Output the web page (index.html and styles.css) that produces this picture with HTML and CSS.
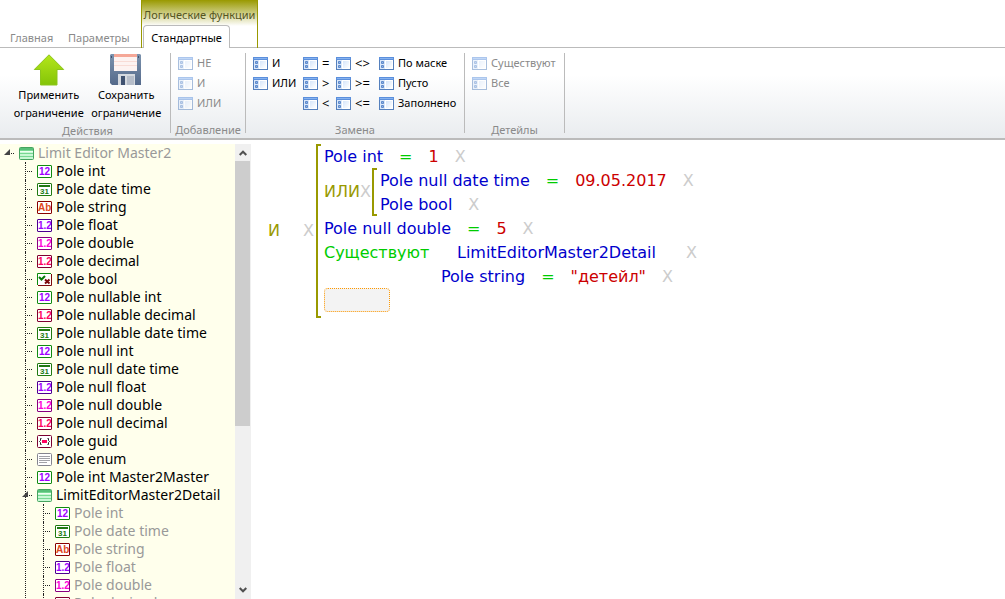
FILE: index.html
```html
<!DOCTYPE html>
<html lang="ru">
<head>
<meta charset="utf-8">
<title>Limit Editor</title>
<link rel="stylesheet" href="styles.css">
</head>
<body>
<svg class="defs" aria-hidden="true">
  <defs>
    <linearGradient id="leaf" x1="0" y1="0" x2="0" y2="1"><stop offset="0" stop-color="#b4e61a"/><stop offset="1" stop-color="#84c408"/></linearGradient>
    <linearGradient id="steel" x1="0" y1="0" x2="0" y2="1"><stop offset="0" stop-color="#7c93ae"/><stop offset="1" stop-color="#54698a"/></linearGradient>
    <linearGradient id="pane" x1="0" y1="0" x2="1" y2="1"><stop offset="0" stop-color="#d5e5fa"/><stop offset="1" stop-color="#ffffff"/></linearGradient>
  </defs>
  <symbol id="form" viewBox="0 0 15 13">
    <rect x=".5" y=".5" width="14" height="12" fill="#fff" stroke="#5580bd"/>
    <rect x="0" y="0" width="15" height="3" fill="#5b8fdc"/><rect x="1" y="1" width="13" height="1" fill="#86b2ef"/>
    <rect x="1" y="3" width="5" height="9" fill="#dbe8fa"/>
    <path d="M2.5 4.5h2v2h-2zM2.5 8.500h2v2h-2z" fill="#8fb3e8" stroke="#5e8acb"/>
    <rect x="7" y="4" width="6" height="7" fill="url(#pane)"/>
  </symbol>
  <symbol id="table" viewBox="0 0 15 13">
    <rect x=".5" y=".5" width="14" height="12" rx="1" fill="#c9f8d5" stroke="#45a35f"/>
    <path d="M1 1h13v2H1z" fill="#57c078"/><path d="M1 3h13v1H1zM1 6h13v1H1zM1 9h13v1H1z" fill="#78d893"/><path d="M1 4h13v1H1z" fill="#effff2"/>
  </symbol>
  <symbol id="bool" viewBox="0 0 15 13">
    <path d="M1 1h13v11H1z" fill="#fff"/>
    <path d="M.5 12V.5H14" fill="none" stroke="#0b8a0b"/><path d="M1 12.500h13.500V1" fill="none" stroke="#7c0a0a"/>
    <path d="M2 4l2.500 2.500L8 3" fill="none" stroke="#077a07" stroke-width="2"/><path d="M8 6.500l4.500 4M12.500 6.500l-4.500 4" stroke="#7c0a0a" stroke-width="2"/>
  </symbol>
  <symbol id="guid" viewBox="0 0 15 13">
    <rect x=".5" y=".5" width="14" height="12" rx="1" fill="#fff" stroke="#7a0030"/><path d="M4.500 3.500h-1v2l-1 1 1 1v2h1M10.500 3.500h1v2l1 1-1 1v2h-1" fill="none" stroke="#222"/><path d="M5 5h5v3H5z" fill="#ff0060"/>
  </symbol>
  <symbol id="enum" viewBox="0 0 15 13">
    <rect x=".5" y=".5" width="14" height="12" rx="1" fill="#fff" stroke="#85858f"/><path d="M2 3.500h11M2 5.500h11M2 7.500h11M2 9.500h8" stroke="#a2a2a8"/>
  </symbol>
  <symbol id="chev" viewBox="0 0 8 6"><path d="M.7 5L4 1.700 7.300 5" fill="none" stroke="#505050" stroke-width="2"/></symbol>
</svg>

<header class="ribbon">
  <nav class="tabs">
    <button class="tab first">Главная</button>
    <button class="tab second">Параметры</button>
    <div class="context">
      <div class="context-title">Логические функции</div>
      <button class="tab active">Стандартные</button>
    </div>
  </nav>
  <div class="groups">
    <section class="group actions">
      <div class="big-row">
        <button class="big"><svg width="32" height="32" viewBox="0 0 32 32" aria-hidden="true"><path d="M16 .8L30.700 15.500H24V31H7.500V15.500H1.300z" fill="url(#leaf)" stroke="#8cc51c"/></svg><span>Применить</span><span>ограничение</span></button>
        <button class="big"><svg width="32" height="32" viewBox="0 0 32 32" aria-hidden="true"><path d="M1 0h29l1 1v30H2l-2-2V1z" fill="url(#steel)"/><path d="M4 0h23v17H4z" fill="#fdf3f1"/><path d="M4 0h23v3H4z" fill="#f5a797"/><path d="M4 7.500h23M4 11.500h23" stroke="#f8dcd6"/><path d="M8 20h17v11H8z" fill="#d5d9df"/><path d="M11 22h4v9h-4z" fill="#405270"/><path d="M17 22h7v9h-7z" fill="#b6bdc9"/><path d="M1 2h1v2H1zM28 2h1v2h-1z" fill="#3f516d"/></svg><span>Сохранить</span><span>ограничение</span></button>
      </div>
      <h2>Действия</h2>
    </section>
    <section class="group add">
      <div class="cols"><div class="col">
        <button class="cmd" disabled><svg><use href="#form"/></svg>НЕ</button>
        <button class="cmd" disabled><svg><use href="#form"/></svg>И</button>
        <button class="cmd" disabled><svg><use href="#form"/></svg>ИЛИ</button>
      </div></div>
      <h2>Добавление</h2>
    </section>
    <section class="group replace">
      <div class="cols">
        <div class="col c1"><button class="cmd"><svg><use href="#form"/></svg>И</button><button class="cmd"><svg><use href="#form"/></svg>ИЛИ</button></div>
        <div class="col ops c2"><button class="cmd"><svg><use href="#form"/></svg>=</button><button class="cmd"><svg><use href="#form"/></svg>&gt;</button><button class="cmd"><svg><use href="#form"/></svg>&lt;</button></div>
        <div class="col ops c3"><button class="cmd"><svg><use href="#form"/></svg>&lt;&gt;</button><button class="cmd"><svg><use href="#form"/></svg>&gt;=</button><button class="cmd"><svg><use href="#form"/></svg>&lt;=</button></div>
        <div class="col"><button class="cmd"><svg><use href="#form"/></svg>По маске</button><button class="cmd"><svg><use href="#form"/></svg>Пусто</button><button class="cmd"><svg><use href="#form"/></svg>Заполнено</button></div>
      </div>
      <h2>Замена</h2>
    </section>
    <section class="group details">
      <div class="cols"><div class="col">
        <button class="cmd" disabled><svg><use href="#form"/></svg>Существуют</button>
        <button class="cmd" disabled><svg><use href="#form"/></svg>Все</button>
      </div></div>
      <h2>Детейлы</h2>
    </section>
  </div>
</header>

<div class="work">
  <aside class="side">
    <ul class="tree">
      <li class="open root muted"><div class="node"><svg><use href="#table"/></svg>Limit Editor Master2</div>
        <ul class="plain">
          <li><div class="node"><i class="ic int">12</i>Pole int</div></li>
          <li><div class="node"><i class="ic date">31</i>Pole date time</div></li>
          <li><div class="node"><i class="ic str">Ab</i>Pole string</div></li>
          <li><div class="node"><i class="ic flt">1.2</i>Pole float</div></li>
          <li><div class="node"><i class="ic dbl">1.2</i>Pole double</div></li>
          <li><div class="node"><i class="ic dec">1.2</i>Pole decimal</div></li>
          <li><div class="node"><svg><use href="#bool"/></svg>Pole bool</div></li>
          <li><div class="node"><i class="ic int">12</i>Pole nullable int</div></li>
          <li><div class="node"><i class="ic dec">1.2</i>Pole nullable decimal</div></li>
          <li><div class="node"><i class="ic date">31</i>Pole nullable date time</div></li>
          <li><div class="node"><i class="ic int">12</i>Pole null int</div></li>
          <li><div class="node"><i class="ic date">31</i>Pole null date time</div></li>
          <li><div class="node"><i class="ic flt">1.2</i>Pole null float</div></li>
          <li><div class="node"><i class="ic dbl">1.2</i>Pole null double</div></li>
          <li><div class="node"><i class="ic dec">1.2</i>Pole null decimal</div></li>
          <li><div class="node"><svg><use href="#guid"/></svg>Pole guid</div></li>
          <li><div class="node"><svg><use href="#enum"/></svg>Pole enum</div></li>
          <li><div class="node"><i class="ic int">12</i>Pole int Master2Master</div></li>
          <li class="open"><div class="node"><svg><use href="#table"/></svg>LimitEditorMaster2Detail</div>
            <ul class="muted">
              <li><div class="node"><i class="ic int">12</i>Pole int</div></li>
              <li><div class="node"><i class="ic date">31</i>Pole date time</div></li>
              <li><div class="node"><i class="ic str">Ab</i>Pole string</div></li>
              <li><div class="node"><i class="ic flt">1.2</i>Pole float</div></li>
              <li><div class="node"><i class="ic dbl">1.2</i>Pole double</div></li>
              <li><div class="node"><i class="ic dec">1.2</i>Pole decimal</div></li>
            </ul>
          </li>
        </ul>
      </li>
    </ul>
    <div class="scroll" aria-hidden="true">
      <svg class="arrow"><use href="#chev"/></svg>
      <div class="track"><div class="thumb"></div></div>
      <svg class="arrow down"><use href="#chev"/></svg>
    </div>
  </aside>
  <main class="editor">
    <span class="logic outer">И</span><button class="del">X</button>
    <div class="bracket">
      <div class="cond"><span>Pole int</span><b>=</b><em>1</em><button class="del">X</button></div>
      <div class="nest">
        <span class="logic">ИЛИ</span><button class="del">X</button>
        <div class="bracket">
          <div class="cond"><span>Pole null date time</span><b>=</b><em>09.05.2017</em><button class="del">X</button></div>
          <div class="cond"><span>Pole bool</span><button class="del">X</button></div>
        </div>
      </div>
      <div class="cond"><span>Pole null double</span><b>=</b><em>5</em><button class="del">X</button></div>
      <div class="cond exists"><b>Существуют</b><span>LimitEditorMaster2Detail</span><button class="del">X</button></div>
      <div class="cond child"><span>Pole string</span><b>=</b><em>"детейл"</em><button class="del">X</button></div>
      <button class="slot" aria-label="Новое условие"></button>
    </div>
  </main>
</div>
</body>
</html>
```
FILE: styles.css
```css
* { box-sizing: border-box; }
body { margin: 0; height: 100vh; display: flex; flex-direction: column; overflow: hidden; background: #fff; color: #000; font: 11px/18px "Noto Sans", sans-serif; }
button { margin: 0; padding: 0; border: 0; background: none; color: inherit; font: inherit; text-align: left; white-space: nowrap; }
svg { flex: none; display: block; }
.defs { position: absolute; width: 0; height: 0; }

.tabs { display: flex; align-items: flex-end; height: 48px; background: linear-gradient(#bbb, #bbb) bottom / 100% 1px no-repeat; }
.tab { height: 20px; color: #8a8a8a; }
.first { margin-left: 10px; width: 58px; }
.second { width: 73px; }
.context { width: 117px; height: 48px; border: solid #990; border-width: 0 1px; background: linear-gradient(#990, #fff) top / 100% 26px no-repeat; }
.context-title { height: 25px; padding-top: 6px; color: #555522; text-align: center; white-space: nowrap; }
.tab.active { display: block; margin-left: 1px; width: 87px; height: 23px; padding-top: 2px; border: 1px solid #bbb; border-bottom: 0; border-radius: 4px 4px 0 0; background: #fff; color: #000; text-align: center; }

.groups { display: flex; height: 92px; padding-top: 5px; border-bottom: 2px solid #bbb; background: linear-gradient(#fff 30%, #e9ecef); }
.group { height: 80px; border-right: 1px solid #bbb; }
.group h2 { margin: 0; font: inherit; color: #8a8a8a; text-align: center; }
.actions { width: 171px; padding: 1px 5px 0 10px; }
.add { width: 75px; }
.replace { width: 219px; }
.details { width: 100px; }
.big-row { display: flex; justify-content: space-around; }
.big { display: flex; flex-direction: column; align-items: center; }
.cols { display: flex; height: 68px; padding-left: 7px; }
.col { display: flex; flex-direction: column; }
.c1 { width: 50px; }
.c2 { width: 33px; }
.c3 { width: 43px; }
.ops { font-size: 13px; }
.cmd { display: flex; align-items: center; gap: 4px; height: 20px; }
.cmd svg { width: 15px; height: 13px; }
.cmd:disabled { color: #8a8a8a; }
.cmd:disabled svg { opacity: .5; }

.work { flex: 1; min-height: 0; display: flex; padding-top: 4px; }
.side { display: flex; width: 251px; background: #ffffec; overflow: hidden; }
.tree { flex: 1; font-size: 14px; padding-left: 19px; }
.tree, .tree ul { margin: 0; list-style: none; }
.tree ul { padding-left: 18px; }
.tree li { position: relative; }
.muted { color: #999; }
.plain { color: #000; }
.node { display: flex; align-items: center; gap: 4px; height: 18px; white-space: nowrap; }
.node svg, .ic { width: 15px; height: 13px; }
.tree li::before { content: ""; position: absolute; left: -12px; top: 0; height: 100%; border-left: 1px dotted #222; }
.tree .root::before { display: none; }
.node::before { content: ""; position: absolute; left: -10px; top: 9px; width: 5px; border-top: 1px dotted #222; }
.open > .node::after { content: ""; position: absolute; left: -15px; top: 5px; width: 6px; height: 6px; background: #444; clip-path: polygon(100% 0, 100% 100%, 0 100%); }
.ic { flex: none; border: 1px solid; border-radius: 1px; background: #fff; font: bold 10px/11px "Liberation Sans Narrow", "Liberation Sans", sans-serif; text-align: center; overflow: hidden; }
.int { border-color: #108a10; color: #a000ff; }
.date { padding-top: 3px; border-color: #207a10; color: #207a10; background: linear-gradient(#207a10, #207a10) 50% 1px / 11px 2px no-repeat #fff; font-size: 8px; line-height: 9px; }
.str { border-color: #800; color: #e04820; }
.flt { border-color: #4b0090; color: #a000ff; }
.dbl { border-color: #880080; color: #ff00d8; }
.dec { border-color: #800030; color: #ff0060; }

.scroll { display: flex; flex-direction: column; width: 16px; background: #f0f0f0; }
.arrow { width: 8px; height: 6px; margin: 6px 4px 5px; }
.down { transform: rotate(180deg); margin: 5px 4px 6px; }
.track { flex: 1; }
.thumb { width: 15px; height: 63%; background: #cdcdcd; }

.editor { flex: 1; display: flex; align-self: flex-start; align-items: center; padding-left: 17px; font: 16px/24px "DejaVu Sans", sans-serif; white-space: nowrap; }
.logic { color: #990; }
.outer { width: 35px; }
.del { color: #ccc; }
.bracket { position: relative; margin-left: 2px; padding-left: 6px; border-left: 2px solid #990; }
.bracket::before, .bracket::after { content: ""; position: absolute; left: 0; width: 3px; height: 2px; background: #990; }
.bracket::before { top: 0; }
.bracket::after { bottom: 0; }
.editor > .bracket { padding-bottom: 6px; }
.cond { display: flex; height: 24px; line-height: 26px; }
.cond span { color: #00c; }
.cond b { margin-left: 16px; color: #0c0; font-weight: normal; }
.cond em { margin-left: 16px; color: #c00; font-style: normal; }
.cond .del { margin-left: 16px; }
.nest { display: flex; align-items: center; line-height: 26px; }
.nest .bracket { margin-left: 1px; }
.exists b { margin-left: 0; width: 133px; }
.exists .del { margin-left: 30px; }
.child { padding-left: 117px; }
.slot { display: block; width: 66px; height: 24px; border: 1px dotted #f90; border-radius: 4px; background: #f3f3f3; }
```
